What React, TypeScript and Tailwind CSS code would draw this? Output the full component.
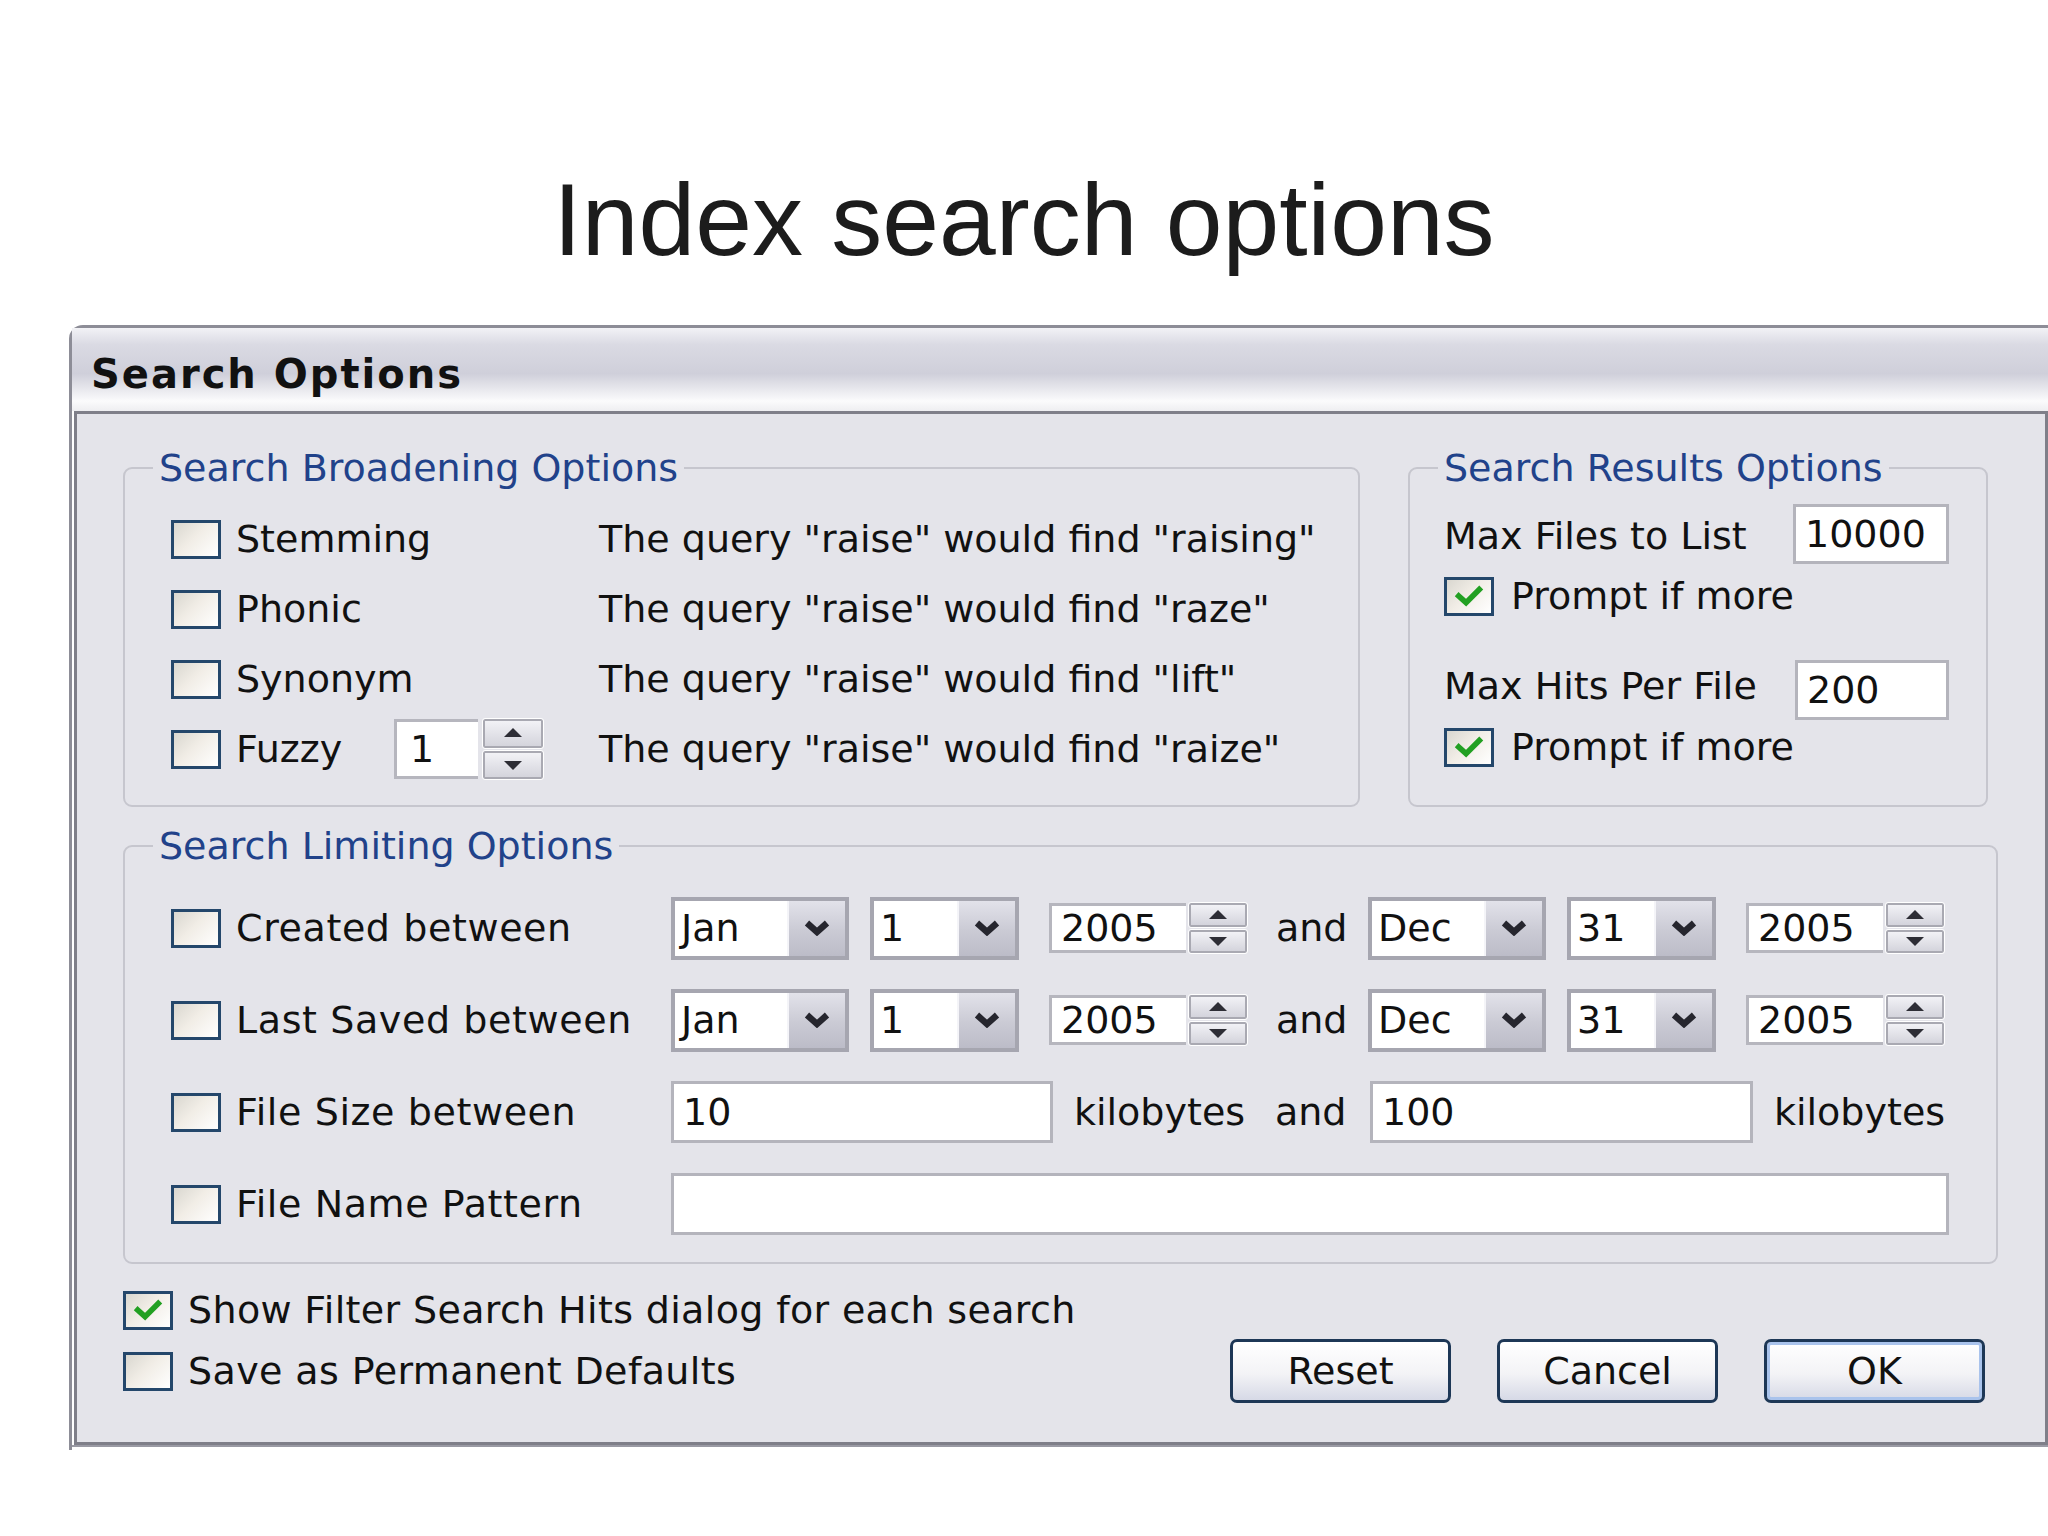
import React from 'react';

const font = "font-['DejaVu_Sans',sans-serif]";

const Check = ({ checked }: { checked?: boolean }) => (
  <span className="flex h-[39px] w-[50px] shrink-0 items-center justify-center border-[3px] border-[#24476b] bg-[linear-gradient(135deg,#d9d7d0_0%,#f1ede6_45%,#ffffff_100%)]">
    {checked && (
      <svg width="30" height="22" viewBox="0 0 20 15">
        <path d="M3 7.5 L8 12 L17 3" fill="none" stroke="#22a022" strokeWidth="3.8" strokeLinecap="square" />
      </svg>
    )}
  </span>
);

const Chevron = () => (
  <svg width="26" height="16" viewBox="0 0 13 8">
    <path d="M1.5 1.5 L6.5 6 L11.5 1.5" fill="none" stroke="#26262e" strokeWidth="3.2" />
  </svg>
);

const Combo = ({ value, className }: { value: string; className: string }) => (
  <div className={`flex h-[63px] shrink-0 border-[4px] border-[#a6a6b0] bg-white ${className}`}>
    <span className="flex flex-1 items-center pl-[6px]">{value}</span>
    <span className="flex w-[58px] items-center justify-center border-l-[2px] border-[#f4f4f8] bg-[linear-gradient(to_bottom,#e2e2ea_0%,#cacad4_55%,#bcbcc8_100%)]">
      <Chevron />
    </span>
  </div>
);

const SpinBtn = ({ up }: { up?: boolean }) => (
  <span className="flex flex-1 items-center justify-center rounded-[2px] border-[2px] border-[#a9a9b2] bg-[linear-gradient(to_bottom,#f2f2f6_0%,#d4d4dc_100%)] outline outline-1 outline-white">
    <svg width="22" height="12" viewBox="0 0 11 6">
      {up ? (
        <path d="M5.5 0.5 L10 5 L1 5 Z" fill="#2d2d35" />
      ) : (
        <path d="M5.5 5.5 L10 1 L1 1 Z" fill="#2d2d35" />
      )}
    </svg>
  </span>
);

const Spinner = ({
  value,
  boxClass,
  spinClass,
}: {
  value: string;
  boxClass: string;
  spinClass: string;
}) => (
  <div className="flex shrink-0 items-stretch gap-[3px]">
    <span className={`flex items-center border-[3px] border-[#b6b6be] border-r-0 bg-white pl-[9px] ${boxClass}`}>{value}</span>
    <span className={`flex flex-col gap-[3px] ${spinClass}`}>
      <SpinBtn up />
      <SpinBtn />
    </span>
  </div>
);

const TextBox = ({ value, className }: { value?: string; className: string }) => (
  <span className={`flex shrink-0 items-center border-[3px] border-[#b4b4bc] bg-white pl-[9px] ${className}`}>{value}</span>
);

const Button = ({ label, primary }: { label: string; primary?: boolean }) => (
  <span
    className={`flex h-[64px] items-center justify-center rounded-[7px] border-[3px] border-[#1d3756] bg-[linear-gradient(to_bottom,#ffffff_0%,#f3f3f6_55%,#d6d9e6_100%)] ${
      primary ? 'w-[221px] shadow-[inset_0_0_0_3px_#a9c3ec]' : 'w-[221px]'
    }`}
  >
    {label}
  </span>
);

const broadening = [
  { label: 'Stemming', desc: 'The query "raise" would find "raising"' },
  { label: 'Phonic', desc: 'The query "raise" would find "raze"' },
  { label: 'Synonym', desc: 'The query "raise" would find "lift"' },
];

const DateRow = ({ label }: { label: string }) => (
  <div className="flex h-[92px] items-center pl-[46px]">
    <Check />
    <span className="ml-[15px] w-[435px] shrink-0 tracking-[0.6px]">{label}</span>
    <Combo value="Jan" className="w-[178px]" />
    <Combo value="1" className="ml-[21px] w-[149px]" />
    <span className="ml-[30px]">
      <Spinner value="2005" boxClass="w-[137px]" spinClass="w-[58px]" />
    </span>
    <span className="ml-[29px] w-[92px] shrink-0">and</span>
    <Combo value="Dec" className="w-[178px]" />
    <Combo value="31" className="ml-[21px] w-[149px]" />
    <span className="ml-[30px]">
      <Spinner value="2005" boxClass="w-[137px]" spinClass="w-[58px]" />
    </span>
  </div>
);

export default function App() {
  return (
    <div className="h-[1536px] w-[2048px] overflow-hidden bg-white">
      <h1 className="mt-[169px] text-center font-['Liberation_Sans',Arial,sans-serif] text-[102px] leading-none text-[#1c1c1c]">
        Index search options
      </h1>

      <div className={`ml-[69px] mt-[54px] w-[1979px] ${font} text-[38px] leading-[44px] text-[#111]`}>
        <div className="rounded-tl-[14px] border-l-[3px] border-t-[3px] border-[#8d8d97] pb-[3px]">
          <div className="flex h-[83px] items-center bg-[linear-gradient(to_bottom,#f2f2f6_0%,#dadae3_20%,#cfcfda_55%,#fbfbfc_88%,#eeeef1_100%)] pl-[19px] pt-[8px] font-bold tracking-[2px] text-[40px]">
            Search Options
          </div>

          <div className="ml-[2px] border-[3px] border-[#7f7f89] bg-[#e4e4ea] pb-[39px] pl-[46px] pr-[47px] pt-[32px]">
            <div className="flex gap-[48px]">
              <fieldset className="h-[361px] w-[1237px] shrink-0 rounded-[9px] border-[2px] border-[#c6c6ce]">
                <legend className="ml-[28px] px-[6px] text-[#21428a]">Search Broadening Options</legend>
                <div className="pt-[14px]">
                  {broadening.map((r) => (
                    <div key={r.label} className="flex h-[70px] items-center pl-[46px]">
                      <Check />
                      <span className="ml-[15px] w-[363px] shrink-0">{r.label}</span>
                      <span>{r.desc}</span>
                    </div>
                  ))}
                  <div className="flex h-[70px] items-center pl-[46px]">
                    <Check />
                    <span className="ml-[15px] flex w-[363px] shrink-0 items-center">
                      <span className="w-[158px] shrink-0">Fuzzy</span>
                      <span className="flex h-[60px] items-stretch gap-[5px]">
                        <span className="flex w-[84px] items-center border-[3px] border-r-0 border-[#b6b6be] bg-white pl-[13px]">1</span>
                        <span className="flex w-[60px] flex-col gap-[3px]">
                          <SpinBtn up />
                          <SpinBtn />
                        </span>
                      </span>
                    </span>
                    <span>The query "raise" would find "raize"</span>
                  </div>
                </div>
              </fieldset>

              <fieldset className="h-[361px] w-[580px] shrink-0 rounded-[9px] border-[2px] border-[#c6c6ce]">
                <legend className="ml-[28px] px-[6px] text-[#21428a]">Search Results Options</legend>
                <div className="pl-[34px] pr-[37px] pt-[12px]">
                  <div className="flex h-[64px] items-center justify-between">
                    <span className="pt-[4px]">Max Files to List</span>
                    <TextBox value="10000" className="h-[60px] w-[156px]" />
                  </div>
                  <div className="mt-[5px] flex h-[50px] items-center">
                    <Check checked />
                    <span className="ml-[17px]">Prompt if more</span>
                  </div>
                  <div className="mt-[37px] flex h-[64px] items-center justify-between">
                    <span className="-mt-[8px]">Max Hits Per File</span>
                    <TextBox value="200" className="h-[60px] w-[154px]" />
                  </div>
                  <div className="flex h-[50px] items-center">
                    <Check checked />
                    <span className="ml-[17px]">Prompt if more</span>
                  </div>
                </div>
              </fieldset>
            </div>

            <fieldset className="mt-[17px] h-[440px] w-[1875px] rounded-[9px] border-[2px] border-[#c6c6ce]">
              <legend className="ml-[28px] px-[6px] text-[#21428a]">Search Limiting Options</legend>
              <div className="pt-[14px]">
                <DateRow label="Created between" />
                <DateRow label="Last Saved between" />
                <div className="flex h-[92px] items-center pl-[46px]">
                  <Check />
                  <span className="ml-[15px] w-[435px] shrink-0 tracking-[0.6px]">File Size between</span>
                  <TextBox value="10" className="h-[62px] w-[382px]" />
                  <span className="ml-[21px] w-[201px] shrink-0">kilobytes</span>
                  <span className="w-[95px] shrink-0">and</span>
                  <TextBox value="100" className="h-[62px] w-[383px]" />
                  <span className="ml-[21px]">kilobytes</span>
                </div>
                <div className="flex h-[92px] items-center pl-[46px]">
                  <Check />
                  <span className="ml-[15px] w-[435px] shrink-0 tracking-[0.6px]">File Name Pattern</span>
                  <TextBox className="h-[62px] w-[1278px]" />
                </div>
              </div>
            </fieldset>

            <div className="mt-[17px]">
              <div className="flex h-[58px] items-center">
                <Check checked />
                <span className="ml-[15px] tracking-[0.35px]">Show Filter Search Hits dialog for each search</span>
              </div>
              <div className="flex h-[64px] items-center">
                <Check />
                <span className="ml-[15px] tracking-[0.4px]">Save as Permanent Defaults</span>
                <div className="ml-auto mr-[13px] flex gap-[46px]">
                  <Button label="Reset" />
                  <Button label="Cancel" />
                  <Button label="OK" primary />
                </div>
              </div>
            </div>
          </div>
          <div className="h-[2px] bg-[#9a9aa4]" />
        </div>
      </div>
    </div>
  );
}
